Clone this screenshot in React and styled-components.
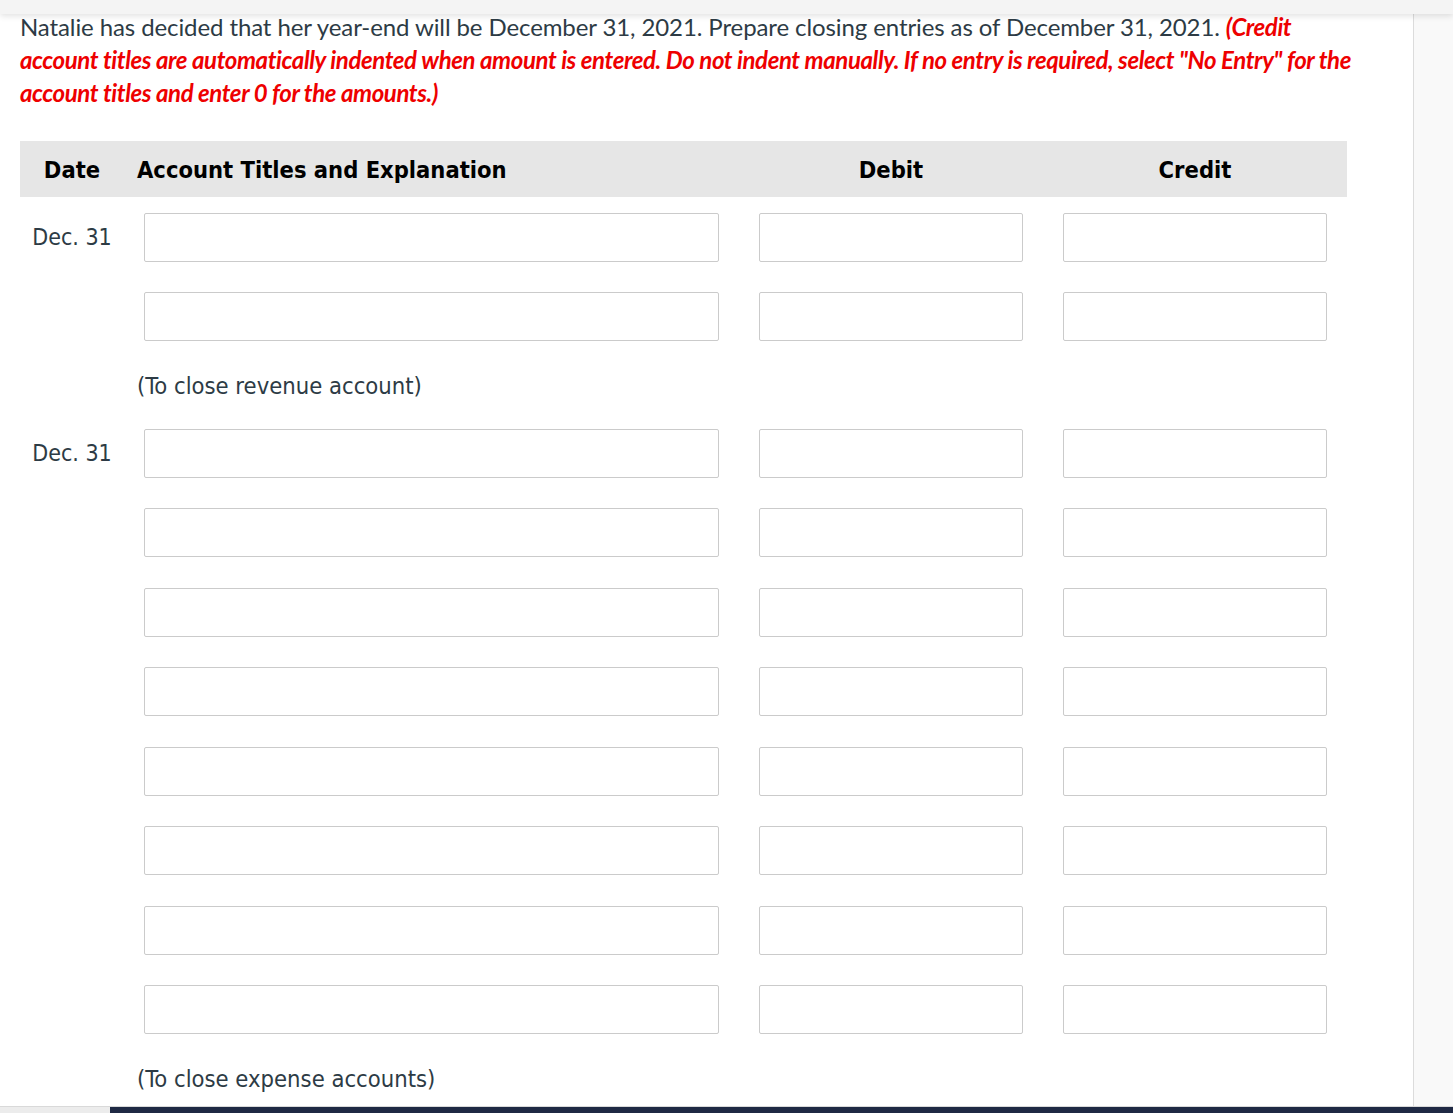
import React from "react"
import styled, { createGlobalStyle } from "styled-components"

const GlobalStyle = createGlobalStyle`
    html, body {
        margin: 0;
        padding: 0;
        background: #fff;
    }
    body {
        font-family: "Lato", "Noto Sans", sans-serif;
        overflow: hidden;
    }
`

const Page = styled.div`
    display: flex;
    flex-direction: column;
    height: 100vh;
`

const TopStrip = styled.div`
    position: relative;
    z-index: 2;
    height: 14px;
    flex-shrink: 0;
    background-color: #f4f4f4;
    box-shadow: 0 2px 6px rgba(0, 0, 0, 0.12);
`

const Body = styled.div`
    flex: 1;
    display: flex;
    min-height: 0;
`

const Main = styled.main`
    width: 1413px;
    flex-shrink: 0;
    padding-left: 20px;
    box-sizing: border-box;
`

const SidePanel = styled.aside`
    flex: 1;
    background-color: #f9f9f9;
    border-left: 1px solid #dcdcdc;
`

const Intro = styled.p`
    margin: -4.5px 0 0;
    max-width: 1345px;
    font-family: "Lato", sans-serif;
    font-size: 24px;
    line-height: 33px;
    color: #2d3b45;
    letter-spacing: -0.1px;
`

const Note = styled.span`
    font-weight: 700;
    font-style: italic;
    color: #ee0000;
    letter-spacing: -0.4px;
`

const Table = styled.div`
    margin-top: 32px;
    width: 1327px;
    font-family: "DejaVu Sans Condensed", "DejaVu Sans", sans-serif;
    color: #2d3b45;
`

const Row = styled.div`
    display: grid;
    grid-template-columns: 104px 615px 304px 304px;
    align-items: center;
`

const HeadRow = styled(Row)`
    height: 56px;
    box-sizing: border-box;
    padding-top: 3px;
    background-color: #e6e6e6;
    color: #000;
    font-weight: 700;
    font-size: 23.5px;
`

const HeadCell = styled.div`
    text-align: ${props => props.align || "center"};
    padding-left: ${props => props.align === "left" ? "13px" : "0"};
`

const EntryRow = styled(Row)`
    padding: 16px 0 14.5px;
`

const DateCell = styled.div`
    text-align: center;
    font-size: 23px;
`

const InputCell = styled.div`
    padding: 0 20px;
`

const Field = styled.input`
    display: block;
    width: 100%;
    height: 49px;
    box-sizing: border-box;
    border: 1px solid #cbcbcb;
    border-radius: 2px;
    background: #fff;
    outline: none;
`

const Explanation = styled.div`
    padding: 15px 0 12px 117px;
    line-height: 30px;
    font-size: 23.6px;
`

const BottomBar = styled.div`
    flex-shrink: 0;
    height: 6px;
    border-top: 1px solid #d9d9d9;
    display: flex;
`

const BottomLeft = styled.div`
    width: 110px;
    background-color: #ececec;
`

const BottomRight = styled.div`
    flex: 1;
    background-color: #1f2944;
`

const Entry = ({ date }) => (
    <EntryRow>
        <DateCell>{date}</DateCell>
        <InputCell><Field /></InputCell>
        <InputCell><Field /></InputCell>
        <InputCell><Field /></InputCell>
    </EntryRow>
)

const App = () => {
    const revenueRows = ["Dec. 31", ""]
    const expenseRows = ["Dec. 31", "", "", "", "", "", "", ""]

    return (
        <Page>
            <GlobalStyle />
            <TopStrip />
            <Body>
                <Main>
                    <Intro>
                        Natalie has decided that her year-end will be December 31, 2021. Prepare closing entries as of December 31, 2021.{" "}
                        <Note>
                            (Credit account titles are automatically indented when amount is entered. Do not indent manually. If no entry is required, select "No Entry" for the account titles and enter 0 for the amounts.)
                        </Note>
                    </Intro>
                    <Table>
                        <HeadRow>
                            <HeadCell>Date</HeadCell>
                            <HeadCell align="left">Account Titles and Explanation</HeadCell>
                            <HeadCell>Debit</HeadCell>
                            <HeadCell>Credit</HeadCell>
                        </HeadRow>
                        {revenueRows.map((d, i) => <Entry key={"r" + i} date={d} />)}
                        <Explanation>(To close revenue account)</Explanation>
                        {expenseRows.map((d, i) => <Entry key={"e" + i} date={d} />)}
                        <Explanation>(To close expense accounts)</Explanation>
                    </Table>
                </Main>
                <SidePanel />
            </Body>
            <BottomBar>
                <BottomLeft />
                <BottomRight />
            </BottomBar>
        </Page>
    )
}

export default App
